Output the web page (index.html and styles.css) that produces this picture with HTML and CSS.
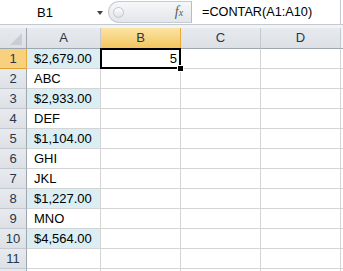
FILE: index.html
```html
<!DOCTYPE html>
<html lang="en">
	<head>
		<title>CONTAR</title>
		<meta charset="utf-8">
		<link rel="stylesheet" href="styles.css">
	</head>
	<body>
		<div class="formula-bar">
			<div class="name-box">
				<span class="name">B1</span>
				<span class="drop"></span>
			</div>
			<div class="grip"><span class="knob"></span></div>
			<div class="fx">f<span class="x">x</span></div>
			<div class="formula">=CONTAR(A1:A10)</div>
		</div>
		<div class="bar-gap"></div>

		<div class="sheet">
			<div class="hd corner"><span class="tri"></span></div>
			<div class="hd col">A</div>
			<div class="hd col active">B</div>
			<div class="hd col">C</div>
			<div class="hd col">D</div>
			<div class="hd col rest"></div>

			<div class="hd row active">1</div>
			<div class="cell fill">$2,679.00</div>
			<div class="cell num selected">5</div>
			<div class="cell"></div><div class="cell"></div><div class="cell rest"></div>

			<div class="hd row">2</div>
			<div class="cell">ABC</div>
			<div class="cell"></div><div class="cell"></div><div class="cell"></div><div class="cell rest"></div>

			<div class="hd row">3</div>
			<div class="cell fill">$2,933.00</div>
			<div class="cell"></div><div class="cell"></div><div class="cell"></div><div class="cell rest"></div>

			<div class="hd row">4</div>
			<div class="cell">DEF</div>
			<div class="cell"></div><div class="cell"></div><div class="cell"></div><div class="cell rest"></div>

			<div class="hd row">5</div>
			<div class="cell fill">$1,104.00</div>
			<div class="cell"></div><div class="cell"></div><div class="cell"></div><div class="cell rest"></div>

			<div class="hd row">6</div>
			<div class="cell">GHI</div>
			<div class="cell"></div><div class="cell"></div><div class="cell"></div><div class="cell rest"></div>

			<div class="hd row">7</div>
			<div class="cell">JKL</div>
			<div class="cell"></div><div class="cell"></div><div class="cell"></div><div class="cell rest"></div>

			<div class="hd row">8</div>
			<div class="cell fill">$1,227.00</div>
			<div class="cell"></div><div class="cell"></div><div class="cell"></div><div class="cell rest"></div>

			<div class="hd row">9</div>
			<div class="cell">MNO</div>
			<div class="cell"></div><div class="cell"></div><div class="cell"></div><div class="cell rest"></div>

			<div class="hd row">10</div>
			<div class="cell fill">$4,564.00</div>
			<div class="cell"></div><div class="cell"></div><div class="cell"></div><div class="cell rest"></div>

			<div class="hd row">11</div>
			<div class="cell"></div><div class="cell"></div><div class="cell"></div><div class="cell"></div><div class="cell rest"></div>

			<!-- row 12, only its top edge shows -->
			<div class="hd row"></div>
			<div class="cell"></div><div class="cell"></div><div class="cell"></div><div class="cell"></div><div class="cell rest"></div>
		</div>
	</body>
</html>
```

FILE: styles.css
```css
body {
	margin: 0px;
	width: 343px;
	height: 271px;
	overflow: hidden;
	background-color: #ffffff;
	font-family: "Liberation Sans", Arial, sans-serif;
	font-size: 13px;
	color: #000000;
}

/* formula bar */

.formula-bar {
	display: flex;
	height: 24px;
	border-bottom: 1px solid #c4c9cf;
	background-color: #ffffff;
}

.name-box {
	display: flex;
	align-items: center;
	width: 108px;
	flex: none;
}

.name {
	width: 90px;
	text-align: center;
	font-size: 13px;
	padding-top: 1px;
}

.drop {
	width: 0;
	height: 0;
	margin-left: 7px;
	margin-top: 2px;
	border-left: 3px solid transparent;
	border-right: 3px solid transparent;
	border-top: 4px solid #444444;
}

.grip {
	display: flex;
	align-items: center;
	width: 62px;
	flex: none;
	margin-top: 1px;
	height: 22px;
	box-sizing: border-box;
	border: 1px solid #c6cbd1;
	border-right: none;
	border-radius: 12px 0 0 12px;
	background: linear-gradient(#f6f7f8, #e3e6ea);
}

.knob {
	width: 9px;
	height: 9px;
	margin-left: 4px;
	border-radius: 50%;
	border: 1px solid #c2c7cd;
	background: linear-gradient(#fdfdfd, #dfe2e6);
}

.fx {
	width: 22px;
	flex: none;
	margin-top: 1px;
	height: 22px;
	box-sizing: border-box;
	border-top: 1px solid #c6cbd1;
	border-bottom: 1px solid #c6cbd1;
	border-right: 1px solid #b7bdc4;
	background: linear-gradient(#f6f7f8, #e3e6ea);
	font-family: "Liberation Serif", serif;
	font-style: italic;
	font-size: 14px;
	color: #555a60;
	text-align: center;
	line-height: 20px;
	padding-right: 3px;
}

.fx .x {
	font-size: 10px;
}

.formula {
	flex: 1;
	padding-left: 10px;
	line-height: 25px;
	font-size: 12.7px;
	border-right: 1px solid #c4c9cf;
	margin-right: 2px;
}

.bar-gap {
	height: 3px;
	background-color: #f1f3f5;
}

/* grid */

.sheet {
	display: grid;
	grid-template-columns: 27px 74px 80px 80px 80px 1fr;
	grid-template-rows: 21px;
	grid-auto-rows: 20px;
}

.hd {
	box-sizing: border-box;
	background: linear-gradient(#e7eaee, #dde1e6);
	color: #27364a;
	text-align: center;
	line-height: 20px;
	border-right: 1px solid #c3c9d0;
	border-bottom: 1px solid #c3c9d0;
}

.hd.col {
	border-bottom-color: #9ea6b0;
}

.hd.row {
	border-right-color: #9ea6b0;
	line-height: 19px;
}

.hd.rest {
	background: #f3f5f7;
	border-right: none;
}

.hd.active {
	background: linear-gradient(#fbe3a4, #f3c65f);
	border-right-color: #e9ab35;
	border-bottom-color: #e0a030;
}

.hd.row.active {
	background: #f7d17e;
}

.corner {
	position: relative;
	border-bottom-color: #9ea6b0;
	border-right-color: #9ea6b0;
}

.tri {
	position: absolute;
	right: 4px;
	bottom: 3px;
	width: 0;
	height: 0;
	border-left: 12px solid transparent;
	border-bottom: 12px solid #c9ced4;
}

.cell {
	box-sizing: border-box;
	border-right: 1px solid #d4d4d4;
	border-bottom: 1px solid #d4d4d4;
	padding-left: 7px;
	line-height: 20px;
	white-space: nowrap;
}

.cell.rest {
	border-right: none;
}

.cell.fill {
	background-color: #daeef3;
}

.cell.num {
	text-align: right;
	padding-right: 3px;
}

.cell.selected {
	position: relative;
}

.cell.selected::after {
	content: "";
	position: absolute;
	left: -1px;
	top: -1px;
	right: -1px;
	bottom: -1px;
	border: 2px solid #000000;
}

.cell.selected::before {
	content: "";
	position: absolute;
	right: -4px;
	bottom: -4px;
	width: 5px;
	height: 5px;
	background-color: #000000;
	border: 1px solid #ffffff;
	z-index: 1;
}
```
